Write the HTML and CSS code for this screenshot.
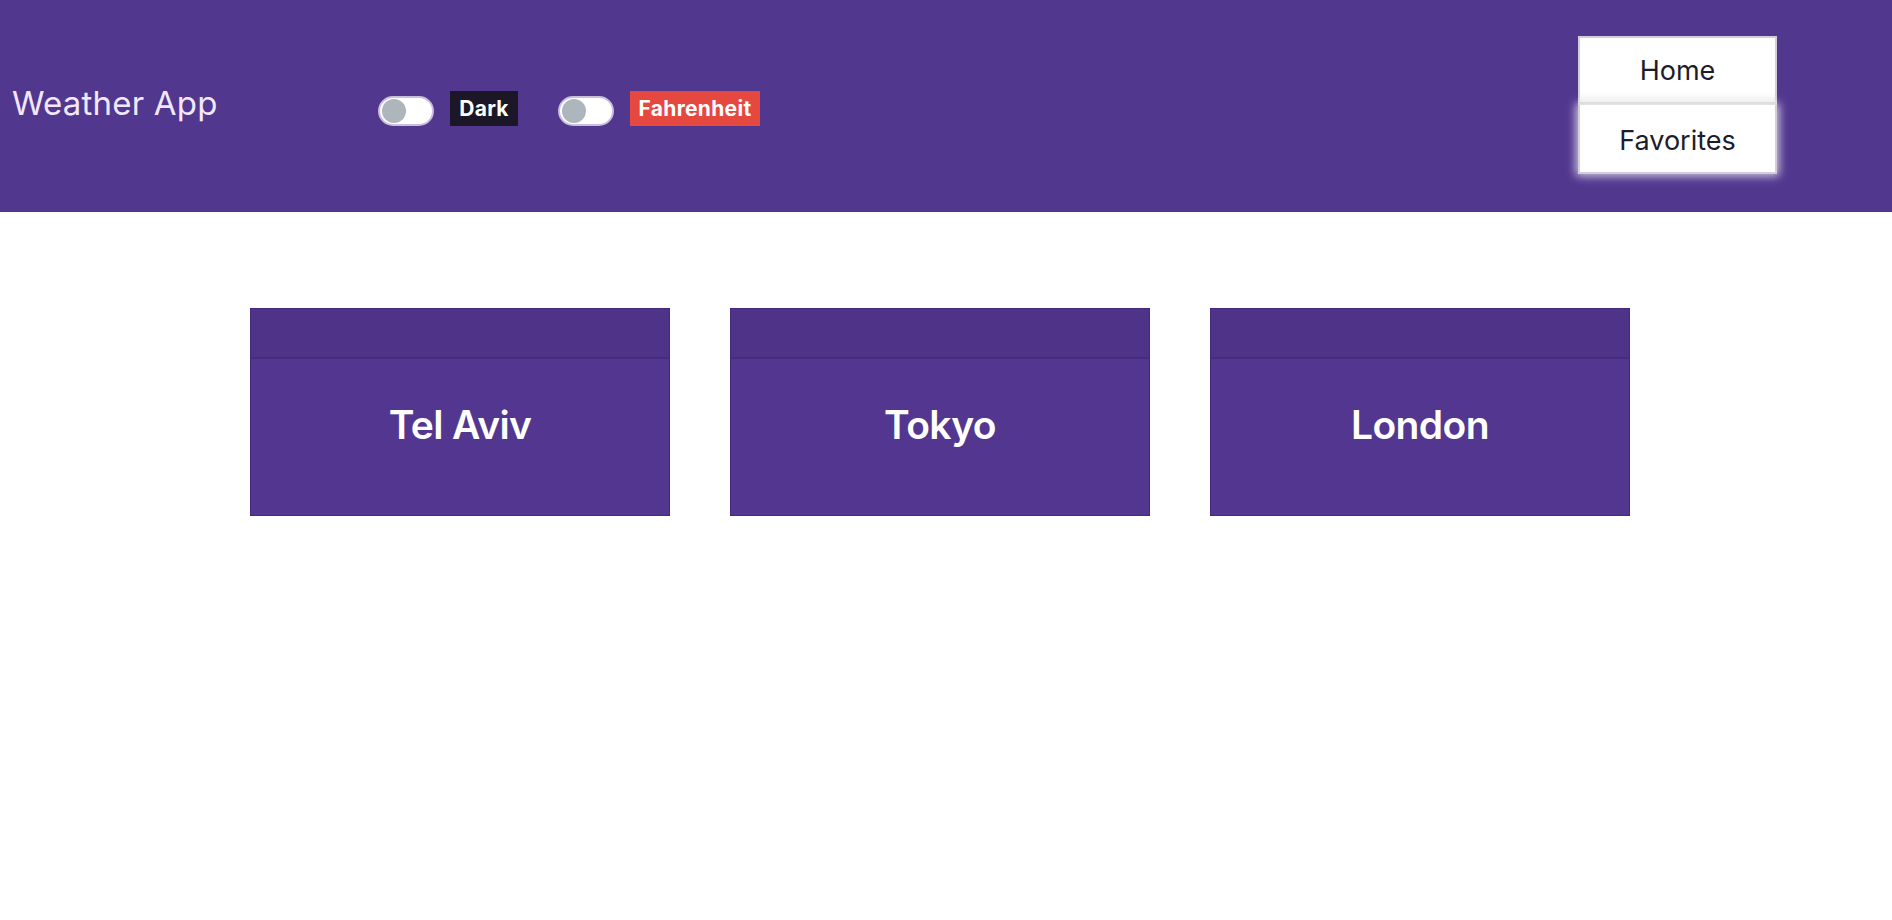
FILE: index.html
```html
<!DOCTYPE html>
<html lang="en">
<head>
<meta charset="utf-8">
<title>Weather App</title>
<link rel="stylesheet" href="styles.css">
</head>
<body>
<header class="topbar">
  <div class="brand">Weather App</div>
  <div class="controls">
    <div class="switch"><span class="knob"></span></div>
    <span class="badge badge-dark">Dark</span>
    <div class="switch switch-second"><span class="knob"></span></div>
    <span class="badge badge-red">Fahrenheit</span>
  </div>
  <nav class="nav">
    <a class="nav-btn nav-home">Home</a>
    <a class="nav-btn nav-fav">Favorites</a>
  </nav>
</header>
<main class="cards">
  <div class="card"><div class="card-head"></div><div class="card-body"><h1>Tel Aviv</h1></div></div>
  <div class="card"><div class="card-head"></div><div class="card-body"><h1>Tokyo</h1></div></div>
  <div class="card"><div class="card-head"></div><div class="card-body"><h1>London</h1></div></div>
</main>
</body>
</html>
```
FILE: styles.css
```css
* { box-sizing: border-box; }
body {
  margin: 0;
  font-family: Inter, "Noto Sans", sans-serif;
  background: #ffffff;
}
.topbar {
  height: 212px;
  background: #52378f;
  display: flex;
  align-items: center;
  padding-left: 12px;
}
.brand {
  width: 366px;
  color: #f1e9fb;
  font-size: 33px;
  letter-spacing: 0.2px;
  font-weight: 400;
  margin-top: -6px;
}
.controls {
  display: flex;
  align-items: center;
  margin-top: 4px;
}
.switch {
  width: 56px;
  height: 30px;
  border-radius: 15px;
  background: #ffffff;
  border: 2px solid #c8bfdc;
  display: flex;
  align-items: center;
  padding-left: 2px;
  margin-right: 16px;
  margin-top: 5px;
}
.switch-second { margin-left: 40px; }
.knob {
  width: 24px;
  height: 24px;
  border-radius: 50%;
  background: #adb5bd;
}
.badge {
  height: 35px;
  display: flex;
  align-items: center;
  justify-content: center;
  color: #ffffff;
  font-size: 21px;
  letter-spacing: 0.3px;
  font-weight: 700;
}
.badge-dark { background: #1b1726; width: 68px; }
.badge-red { background: #e5483f; width: 130px; }
.nav {
  margin-left: auto;
  margin-right: 115px;
  display: flex;
  flex-direction: column;
  width: 199px;
  margin-top: -2px;
}
.nav-btn {
  height: 69px;
  background: #ffffff;
  border: 2px solid #d2ced9;
  display: flex;
  align-items: center;
  justify-content: center;
  font-size: 27px;
  color: #1d1c2a;
}
.nav-home {
  border-bottom: 3px solid #cacaca;
  box-shadow: inset 0 -8px 8px -6px rgba(0,0,0,0.12);
}
.nav-fav {
  border-top: none;
  padding-top: 3px;
  box-shadow: 0 0 9px 2px rgba(255,255,255,0.75);
}
.cards {
  display: flex;
  gap: 60px;
  padding: 96px 0 0 250px;
}
.card {
  width: 420px;
  height: 208px;
  border: 1px solid #43287c;
  background: #52368f;
  display: flex;
  flex-direction: column;
}
.card-head {
  height: 50px;
  background: #4e3388;
  border-bottom: 2px solid #472c80;
}
.card-body {
  flex: 1;
  padding-top: 42px;
  text-align: center;
}
.card-body h1 {
  margin: 0;
  color: #ffffff;
  font-size: 39px;
  line-height: 48px;
  font-weight: 600;
  letter-spacing: -0.6px;
}
```
